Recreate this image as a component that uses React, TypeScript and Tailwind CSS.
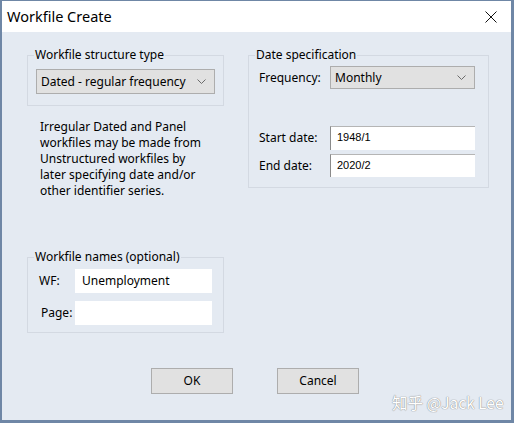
import React from "react";

const font = "font-['Segoe_UI','Noto_Sans','Open_Sans',sans-serif]";

function Chevron() {
  return (
    <svg viewBox="0 0 9 5" className="h-[5px] w-[9px]" fill="none" stroke="#6b6b6b" strokeWidth="1">
      <path d="M0.5 0.5L4.5 4.5L8.5 0.5" />
    </svg>
  );
}

function Combo({ value, className }: { value: string; className: string }) {
  return (
    <div
      className={`flex items-center justify-between border border-[#adadad] bg-[#e1e1e1] pl-[4px] pr-[8px] text-[12px] text-black ${className}`}
    >
      <span>{value}</span>
      <Chevron />
    </div>
  );
}

function DateInput({ value, className }: { value: string; className: string }) {
  return (
    <div
      className={`border-l border-t border-l-[#8a8a8a] border-t-[#b5b5b5] bg-white pl-[6px] pt-[3px] font-['Liberation_Sans',sans-serif] text-[11px] leading-[14px] text-black ${className}`}
    >
      {value}
    </div>
  );
}

// fieldset keeps no padding so the legend sits 6px in from the border,
// the content gets its own padding
function Group({
  title,
  className,
  outer = "",
  children,
}: {
  title: string;
  className: string;
  outer?: string;
  children: React.ReactNode;
}) {
  return (
    <fieldset className={`border border-[#d3d9e2] ${outer}`}>
      <legend className="ml-[6px] px-[1px] text-[12px] leading-[18px] text-black">{title}</legend>
      <div className={className}>{children}</div>
    </fieldset>
  );
}

export default function App() {
  return (
    <div className={`relative h-[423px] w-[514px] ${font}`}>
      <div className="flex h-full w-full flex-col border-b-[3px] border-l-2 border-r-[3px] border-t border-[#6f87a6]">
        {/* title bar */}
        <div className="flex h-[31px] items-center justify-between bg-white pl-[5px] pr-[14px]">
          <span className="text-[14.5px] text-black">Workfile Create</span>
          <svg viewBox="0 0 12 12" className="h-[12px] w-[12px]" fill="none" stroke="#111" strokeWidth="1">
            <path d="M0.5 0.5L11.5 11.5M11.5 0.5L0.5 11.5" />
          </svg>
        </div>

        {/* body */}
        <div className="flex flex-1 flex-col bg-[#e4eaf2] pl-[25px] pt-[14px] text-[12px] text-black">
          <div className="flex gap-[24px]">
            {/* left column */}
            <div className="flex w-[197px] flex-col">
              <Group title="Workfile structure type" className="px-[8px] pb-[11px] pt-[5px]">
                <Combo value="Dated - regular frequency" className="h-[25px] w-[179px]" />
              </Group>

              <p className="mt-[13px] pl-[13px] text-[12px] leading-[16px]">
                Irregular Dated and Panel
                <br />
                workfiles may be made from
                <br />
                Unstructured workfiles by
                <br />
                later specifying date and/or
                <br />
                other identifier series.
              </p>

              <Group
                title="Workfile names (optional)"
                outer="mt-[49px]"
                className="pb-[7px] pl-[8px] pt-[3px]"
              >
                <div className="flex items-center">
                  <span className="w-[39px] pl-[3px]">WF:</span>
                  <div className="flex h-[24px] w-[137px] items-center bg-white pl-[7px]">Unemployment</div>
                </div>
                <div className="mt-[8px] flex items-center">
                  <span className="w-[39px] pl-[5px]">Page:</span>
                  <div className="h-[24px] w-[137px] bg-white" />
                </div>
              </Group>
            </div>

            {/* right column */}
            <div className="flex w-[241px] flex-col">
              <Group title="Date specification" className="pb-[10px] pl-[10px] pt-[2px]">
                <div className="flex items-center">
                  <span className="w-[71px]">Frequency:</span>
                  <Combo value="Monthly" className="h-[23px] w-[145px]" />
                </div>
                <div className="mt-[37px] flex items-center">
                  <span className="w-[71px]">Start date:</span>
                  <DateInput value="1948/1" className="h-[24px] w-[145px]" />
                </div>
                <div className="mt-[4px] flex items-center">
                  <span className="w-[71px]">End date:</span>
                  <DateInput value="2020/2" className="h-[23px] w-[145px]" />
                </div>
              </Group>
            </div>
          </div>

          {/* buttons */}
          <div className="mt-[35px] flex gap-[44px] pl-[124px]">
            <button className="h-[26px] w-[82px] border border-[#adadad] bg-[#e1e1e1] text-[12px]">OK</button>
            <button className="h-[26px] w-[82px] border border-[#adadad] bg-[#e1e1e1] text-[12px]">Cancel</button>
          </div>
        </div>
      </div>

      {/* watermark */}
      <div className="absolute left-[392px] top-[391px] font-['Noto_Sans_CJK_SC',sans-serif] text-[15.5px] text-white [text-shadow:0_0_1px_#8a8a8a,0_0_1px_#8a8a8a]">
        知乎 @Jack Lee
      </div>
    </div>
  );
}
